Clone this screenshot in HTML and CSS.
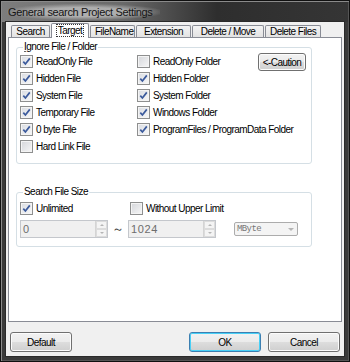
FILE: index.html
```html
<!DOCTYPE html>
<html>
<head>
  <meta charset="UTF-8">
  <link rel="stylesheet" href="styles.css">
</head>
<body>
  <div class="window">
    <div class="titlebar"><span class="title">General search Project Settings</span></div>
    <div class="client">
      <div class="tabs">
        <div class="tab">Search</div>
        <div class="tab active"><span class="focus">Target</span></div>
        <div class="tab">FileName</div>
        <div class="tab">Extension</div>
        <div class="tab">Delete / Move</div>
        <div class="tab">Delete Files</div>
      </div>

      <div class="panel">
        <fieldset class="group ignore">
          <legend><u>I</u>gnore File / Folder</legend>
          <div class="ignoregrid">
            <label class="chk c1"><span class="box on"></span>ReadOnly File</label>
            <label class="chk c2"><span class="box"></span>ReadOnly Folder</label>
            <button class="btn caution" type="button">&lt;-Caution</button>
            <label class="chk c1"><span class="box on"></span>Hidden File</label>
            <label class="chk c2"><span class="box on"></span>Hidden Folder</label>
            <label class="chk c1"><span class="box on"></span>System File</label>
            <label class="chk c2"><span class="box on"></span>System Folder</label>
            <label class="chk c1"><span class="box on"></span>Temporary File</label>
            <label class="chk c2"><span class="box on"></span>Windows Folder</label>
            <label class="chk c1"><span class="box on"></span>0 byte File</label>
            <label class="chk wide"><span class="box on"></span>ProgramFiles / ProgramData Folder</label>
            <label class="chk c1"><span class="box"></span>Hard Link File</label>
          </div>
        </fieldset>

        <fieldset class="group size">
          <legend>Search File Size</legend>
          <div class="sizerow">
            <label class="chk unl"><span class="box on"></span>Unlimited</label>
            <label class="chk"><span class="box"></span>Without Upper Limit</label>
          </div>
          <div class="sizerow inputs">
            <div class="spin"><span class="val">0</span><span class="arrows"><i class="up"></i><i class="dn"></i></span></div>
            <span class="tilde">～</span>
            <div class="spin"><span class="val">1024</span><span class="arrows"><i class="up"></i><i class="dn"></i></span></div>
            <div class="combo"><span class="val mono">MByte</span><i class="dn"></i></div>
          </div>
        </fieldset>
      </div>

      <div class="footer">
        <button class="btn big" type="button">Default</button>
        <span class="spacer"></span>
        <button class="btn big ok" type="button">OK</button>
        <button class="btn big" type="button">Cancel</button>
      </div>
    </div>
  </div>
</body>
</html>
```

FILE: styles.css
```css
body {
  margin: 0;
  background: #000;
  font-family: "Liberation Sans", Arial, sans-serif;
  font-size: 10px;
  letter-spacing: -0.55px;
  color: #000;
}

.window {
  width: 350px;
  height: 362px;
  box-sizing: border-box;
  border: 1px solid #101010;
  padding: 0 5px 5px;
  display: flex;
  flex-direction: column;
  background:
    linear-gradient(to bottom, rgba(0,0,0,0) 0, rgba(0,0,0,0) 21px, #3a3a3a 21px),
    linear-gradient(to right, #7d7d7d 0, #6a6a6a 35%, #2e2e2e 62%, #353535 100%);
  box-shadow: inset 1px 1px 0 #8a8a8a, inset -1px -1px 0 #555;
}

.titlebar {
  height: 21px;
  display: flex;
  align-items: center;
  padding-left: 1px;
}
.title {
  font-size: 11px;
  letter-spacing: -0.35px;
  color: #151515;
  padding: 2px 8px 2px 1px;
  background: radial-gradient(ellipse at center, rgba(190,190,190,0.8) 40%, rgba(150,150,150,0) 75%);
}

.client {
  flex: 1;
  background: #f0f0f0;
  box-shadow: 0 0 0 1px #2a2a2a;
  display: flex;
  flex-direction: column;
}

/* tabs */
.tabs {
  height: 15px;
  display: flex;
  align-items: flex-end;
  padding-left: 5px;
  position: relative;
  z-index: 1;
}
.tab {
  height: 11px;
  line-height: 11px;
  box-sizing: content-box;
  padding: 0 4px;
  margin-right: 1px;
  border: 1px solid #898c95;
  border-bottom: none;
  border-radius: 2px 2px 0 0;
  background: linear-gradient(#f3f3f3, #e3e3e3);
  text-align: center;
  white-space: nowrap;
}
.tab:nth-child(1) { width: 29px; }
.tab:nth-child(3) { width: 35px; }
.tab:nth-child(4) { width: 45px; }
.tab:nth-child(5) { width: 62px; }
.tab:nth-child(6) { width: 46px; }
.tab.active {
  height: 14px;
  line-height: 13px;
  width: 30px;
  background: #fff;
  margin-bottom: -1px;
  padding: 0 3px;
}
.focus {
  outline: 1px dotted #333;
  outline-offset: 0;
  padding: 0 1px;
}

.panel {
  height: 285px;
  box-sizing: border-box;
  margin: 0 2px;
  background: #fff;
  border: 1px solid #898c95;
  padding: 3px 0 0 7px;
}

/* group boxes */
.group {
  width: 296px;
  box-sizing: border-box;
  margin: 0;
  border: 1px solid #d5dfe5;
  border-radius: 3px;
  padding: 0 5px 8px 3px;
}
.group legend {
  padding: 0 1px;
  margin-left: 3px;
  line-height: 12px;
}
.group legend u { text-decoration-color: #666; }
.group.size {
  margin-top: 22px;
  padding-top: 2px;
}

.ignoregrid {
  display: grid;
  grid-template-columns: 117px 1fr auto;
  grid-auto-rows: 17px;
}
.c1 { grid-column: 1; }
.c2 { grid-column: 2; }
.wide { grid-column: 2 / 4; }
.caution {
  grid-column: 3;
  grid-row: 1 / 3;
  align-self: start;
  width: 48px;
  height: 18px;
}

.chk {
  display: flex;
  align-items: center;
  gap: 3px;
  white-space: nowrap;
}
.box {
  width: 11px;
  height: 11px;
  border: 1px solid #8e8f8f;
  background: linear-gradient(135deg, #d4d6da, #f7f7f7);
  box-shadow: inset 0 0 0 1px #f4f4f4;
  display: inline-block;
  flex: none;
}
.box.on {
  background:
    url("data:image/svg+xml;utf8,<svg xmlns='http://www.w3.org/2000/svg' width='11' height='11'><path d='M2.3 5.6 L4.4 8 L8.8 2.4' fill='none' stroke='%233b5a9c' stroke-width='1.7'/></svg>") no-repeat center,
    linear-gradient(135deg, #d9dce2, #f8f8f8);
}

.sizerow {
  display: flex;
  align-items: center;
  height: 17px;
}
.unl { width: 110px; }
.sizerow.inputs {
  height: 18px;
  margin-top: 3px;
}

.spin {
  width: 88px;
  height: 18px;
  box-sizing: border-box;
  border: 1px solid #c4c7cc;
  background: #f0f0f0;
  display: flex;
  color: #6d6d6d;
  letter-spacing: 0.6px;
  font-size: 11px;
}
.spin .val {
  flex: 1;
  padding-left: 2px;
  line-height: 16px;
}
.arrows {
  width: 11px;
  display: flex;
  flex-direction: column;
  border-left: 1px solid #d4d4d4;
}
.arrows i {
  flex: 1;
  display: flex;
  align-items: center;
  justify-content: center;
  background: #f4f4f4;
  border: 1px solid #dcdcdc;
}
.arrows i::after, .combo i::after {
  content: "";
  border-left: 2px solid transparent;
  border-right: 2px solid transparent;
}
.arrows .up::after { border-bottom: 2px solid #b5b5b5; }
.arrows .dn::after, .combo .dn::after { border-top: 2px solid #b5b5b5; }
.combo .dn::after { border-left-width: 3px; border-right-width: 3px; border-top-width: 3px; }

.tilde {
  width: 20px;
  text-align: center;
  font-size: 12px;
  color: #333;
}

.combo {
  width: 64px;
  height: 14px;
  box-sizing: border-box;
  margin-left: 18px;
  border: 1px solid #acacac;
  border-radius: 2px;
  background: #f4f4f4;
  display: flex;
  align-items: center;
  color: #777;
}
.combo .val {
  flex: 1;
  padding-left: 2px;
  font-family: "Liberation Mono", monospace;
  font-size: 9px;
  letter-spacing: -0.6px;
}
.combo i {
  width: 12px;
  display: flex;
  justify-content: center;
}

/* buttons */
.btn {
  font: inherit;
  letter-spacing: inherit;
  color: #000;
  padding: 0;
  border: 1px solid #707070;
  border-radius: 3px;
  background: linear-gradient(#f2f2f2 0, #ebebeb 50%, #dddddd 50%, #cfcfcf 100%);
  box-shadow: inset 0 0 0 1px #fcfcfc;
}
.footer {
  display: flex;
  padding: 10px 4px 0;
  gap: 7px;
}
.spacer { flex: 1; }
.big {
  width: 72px;
  height: 20px;
}
.footer .big:first-child { width: 62px; }
.ok {
  border-color: #3c7fb1;
  box-shadow: inset 0 0 0 1px #48d0f7;
}
```
